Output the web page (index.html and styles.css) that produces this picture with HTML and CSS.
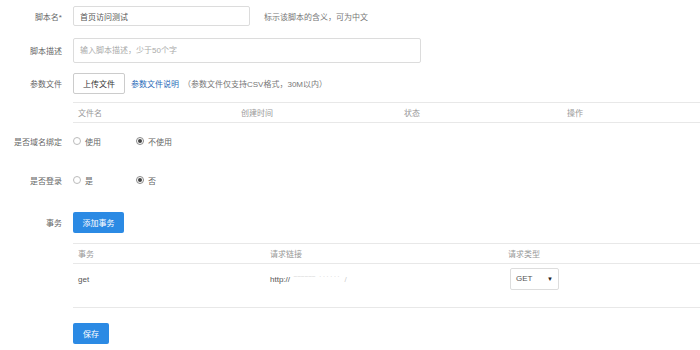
FILE: index.html
```html
<!DOCTYPE HTML>
<html>
    <head>
        <title>脚本编辑</title>
        <link rel="stylesheet" href="styles.css">
    </head>
    <body>
        <div class="form">
            <div class="row row-name">
                <label class="label">脚本名*</label>
                <div class="field">
                    <input class="input input-name" type="text" value="首页访问测试">
                    <span class="hint">标示该脚本的含义，可为中文</span>
                </div>
            </div>
            <div class="row row-desc">
                <label class="label">脚本描述</label>
                <div class="field">
                    <textarea class="input input-desc" placeholder="输入脚本描述，少于50个字"></textarea>
                </div>
            </div>
            <div class="row row-file">
                <label class="label">参数文件</label>
                <div class="field">
                    <button class="btn btn-default">上传文件</button>
                    <a class="link" href="#">参数文件说明</a>
                    <span class="hint">（参数文件仅支持CSV格式，30M以内）</span>
                </div>
            </div>
            <div class="row row-table">
                <div class="label"></div>
                <table class="table file-table">
                    <thead>
                        <tr>
                            <th class="col-a">文件名</th>
                            <th class="col-a">创建时间</th>
                            <th class="col-a">状态</th>
                            <th>操作</th>
                        </tr>
                    </thead>
                </table>
            </div>
            <div class="row row-radio row-domain">
                <label class="label">是否域名绑定</label>
                <div class="field">
                    <span class="radio"><i class="dot"></i>使用</span>
                    <span class="radio"><i class="dot checked"></i>不使用</span>
                </div>
            </div>
            <div class="row row-radio row-login">
                <label class="label">是否登录</label>
                <div class="field">
                    <span class="radio"><i class="dot"></i>是</span>
                    <span class="radio"><i class="dot checked"></i>否</span>
                </div>
            </div>
            <div class="row row-action">
                <label class="label">事务</label>
                <div class="field">
                    <button class="btn btn-primary">添加事务</button>
                </div>
            </div>
            <div class="row row-table2">
                <div class="label"></div>
                <table class="table action-table">
                    <thead>
                        <tr>
                            <th class="col-name">事务</th>
                            <th class="col-url">请求链接</th>
                            <th>请求类型</th>
                        </tr>
                    </thead>
                    <tbody>
                        <tr>
                            <td>get</td>
                            <td>http://<span class="blur">‾‾‾‾‾‾ ˙˙˙˙˙˙ /</span></td>
                            <td>
                                <div class="select">GET<span class="caret">▼</span></div>
                            </td>
                        </tr>
                    </tbody>
                </table>
            </div>
            <div class="row row-save">
                <div class="label"></div>
                <div class="field">
                    <button class="btn btn-primary btn-save">保存</button>
                </div>
            </div>
        </div>
    </body>
</html>
```
FILE: styles.css
```css
html, body {
    margin: 0;
    overflow: hidden;
}
body {
    font-family: "Liberation Sans", "Noto Sans CJK SC", sans-serif;
    font-size: 8px;
    color: #666;
    background-color: #fff;
}
.form {
    padding-top: 6px;
}
.row {
    display: flex;
    align-items: center;
}
.label {
    width: 62px;
    flex: none;
    text-align: right;
    margin-right: 11px;
    color: #666;
}
.field {
    display: flex;
    align-items: center;
}
.input {
    box-sizing: border-box;
    border: 1px solid #dcdcdc;
    border-radius: 2px;
    font-family: inherit;
    font-size: 8px;
    color: #555;
    padding: 0 6px;
    margin: 0;
    outline: none;
}
.input-name {
    width: 177px;
    height: 20px;
}
.input-desc {
    width: 348px;
    height: 25px;
    resize: none;
    padding-top: 6px;
    line-height: 11px;
}
.input-desc::placeholder {
    color: #aaa;
}
.hint {
    color: #777;
    margin-left: 14px;
}
.row-desc {
    margin-top: 12px;
}
.row-file {
    margin-top: 10px;
}
.row-file .hint {
    margin-left: 4px;
}
.btn {
    box-sizing: border-box;
    height: 21px;
    border-radius: 2px;
    font-family: inherit;
    font-size: 8px;
    cursor: pointer;
    padding: 0;
    margin: 0;
}
.btn-default {
    width: 52px;
    background-color: #fff;
    border: 1px solid #ccc;
    color: #333;
}
.btn-primary {
    width: 51px;
    background-color: #2b8ae4;
    border: none;
    color: #fff;
}
.btn-save {
    width: 36px;
}
.link {
    color: #2a6bb8;
    text-decoration: none;
    margin-left: 6px;
}
.table {
    border-collapse: collapse;
    table-layout: fixed;
    width: 627px;
}
.table th {
    text-align: left;
    font-weight: normal;
    color: #999;
    height: 19px;
    padding: 0 0 0 5px;
    border-top: 1px solid #e8e8e8;
    border-bottom: 1px solid #e8e8e8;
}
.row-table {
    margin-top: 8px;
}
.file-table .col-a {
    width: 158px;
}
.row-radio {
    height: 14px;
}
.row-domain {
    margin-top: 11px;
}
.row-login {
    margin-top: 25px;
}
.radio {
    display: flex;
    align-items: center;
    width: 63px;
    color: #666;
}
.dot {
    box-sizing: border-box;
    width: 8px;
    height: 8px;
    border: 1px solid #bbb;
    border-radius: 50%;
    margin-right: 4px;
    position: relative;
}
.dot.checked {
    border-color: #888;
}
.dot.checked::after {
    content: "";
    position: absolute;
    left: 1px;
    top: 1px;
    width: 4px;
    height: 4px;
    border-radius: 50%;
    background-color: #444;
}
.row-action {
    margin-top: 25px;
}
.row-table2 {
    margin-top: 10px;
}
.action-table .col-name {
    width: 187px;
}
.action-table .col-url {
    width: 233px;
}
.action-table td {
    height: 39px;
    padding: 4px 0 0 5px;
    vertical-align: top;
    line-height: 24px;
    border-bottom: 1px solid #e8e8e8;
    color: #555;
}
.blur {
    color: #ccc;
    margin-left: 4px;
    letter-spacing: 1px;
}
.select {
    box-sizing: border-box;
    width: 49px;
    height: 22px;
    margin-left: 2px;
    border: 1px solid #ddd;
    border-radius: 2px;
    display: flex;
    align-items: center;
    justify-content: space-between;
    padding: 0 5px;
    color: #555;
}
.caret {
    font-size: 6px;
    line-height: 6px;
    color: #222;
}
.row-save {
    margin-top: 15px;
}
```
